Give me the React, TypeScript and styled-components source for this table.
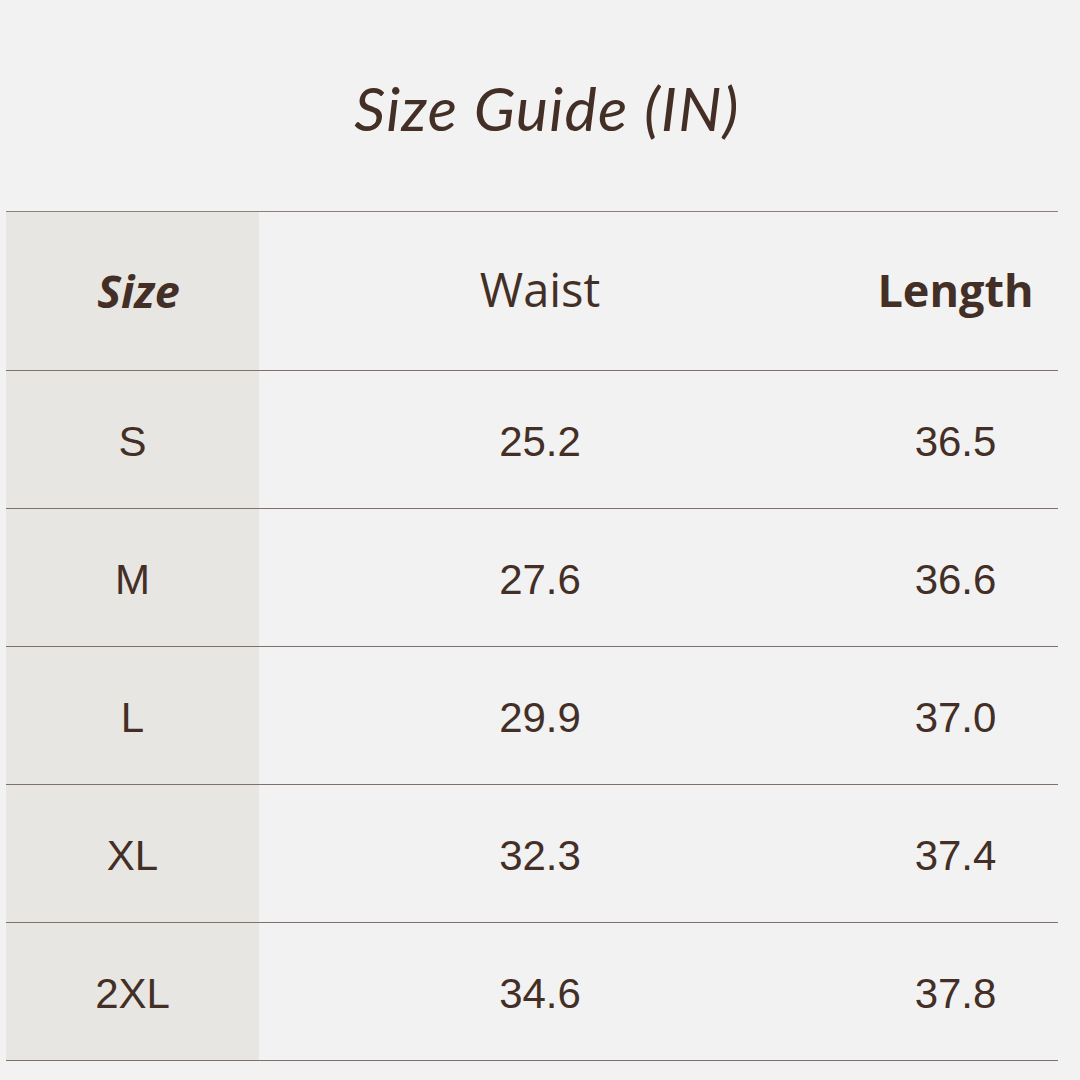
import React from "react";
import styled, { createGlobalStyle } from "styled-components";

const Global = createGlobalStyle`
  html, body { margin: 0; padding: 0; background: #f2f2f2; }
  body { width: 1080px; height: 1080px; overflow: hidden; }
`;

const Page = styled.div`
  width: 1080px;
  height: 1080px;
  background: #f2f2f2;
  color: #432f25;
  display: flex;
  flex-direction: column;
  align-items: flex-start;
`;

const Title = styled.h1`
  margin: 0;
  width: 1080px;
  height: 211px;
  box-sizing: border-box;
  padding-top: 72px;
  padding-left: 14px;
  text-align: center;
  font-family: Lato, "Open Sans", sans-serif;
  font-style: italic;
  font-weight: 400;
  font-size: 61px;
  line-height: 72px;
  letter-spacing: 1.2px;
  color: #432f25;
`;

const Table = styled.div`
  margin-left: 6px;
  width: 1052px;
  display: grid;
  grid-template-columns: 253px 562px 1fr;
  border-top: 1.5px solid #8c8079;
`;

const Cell = styled.div<{ $first?: boolean; $last?: boolean; $head?: boolean }>`
  height: ${(p) => (p.$head ? 158 : 137)}px;
  box-sizing: content-box;
  border-bottom: 1.5px solid #7d716a;
  background: ${(p) => (p.$first ? "#e8e6e2" : "transparent")};
  display: flex;
  align-items: center;
  justify-content: center;
  padding-left: ${(p) => (p.$last ? 32 : 0)}px;
  font-family: "Liberation Sans", Arial, sans-serif;
  font-size: 42px;
  color: #432f25;
`;

const Value = styled.span`
  margin-top: 4px;
`;

const HeadSize = styled.span`
  font-family: "Open Sans", sans-serif;
  font-style: italic;
  font-weight: 700;
  font-size: 45px;
  margin-left: 12px;
  margin-top: -2px;
`;

const HeadWaist = styled.span`
  font-family: "Open Sans", sans-serif;
  font-weight: 400;
  font-size: 47px;
  margin-top: -4px;
`;

const HeadLength = styled.span`
  font-family: "Open Sans", sans-serif;
  font-weight: 700;
  font-size: 45px;
  margin-top: -4px;
`;

const rows = [
  ["S", "25.2", "36.5"],
  ["M", "27.6", "36.6"],
  ["L", "29.9", "37.0"],
  ["XL", "32.3", "37.4"],
  ["2XL", "34.6", "37.8"],
];

export default function App() {
  return (
    <>
      <Global />
      <Page>
        <Title>Size Guide (IN)</Title>
        <Table>
          <Cell $head $first>
            <HeadSize>Size</HeadSize>
          </Cell>
          <Cell $head>
            <HeadWaist>Waist</HeadWaist>
          </Cell>
          <Cell $head $last>
            <HeadLength>Length</HeadLength>
          </Cell>
          {rows.map((r) => (
            <React.Fragment key={r[0]}>
              <Cell $first>
                <Value>{r[0]}</Value>
              </Cell>
              <Cell>
                <Value>{r[1]}</Value>
              </Cell>
              <Cell $last>
                <Value>{r[2]}</Value>
              </Cell>
            </React.Fragment>
          ))}
        </Table>
      </Page>
    </>
  );
}
